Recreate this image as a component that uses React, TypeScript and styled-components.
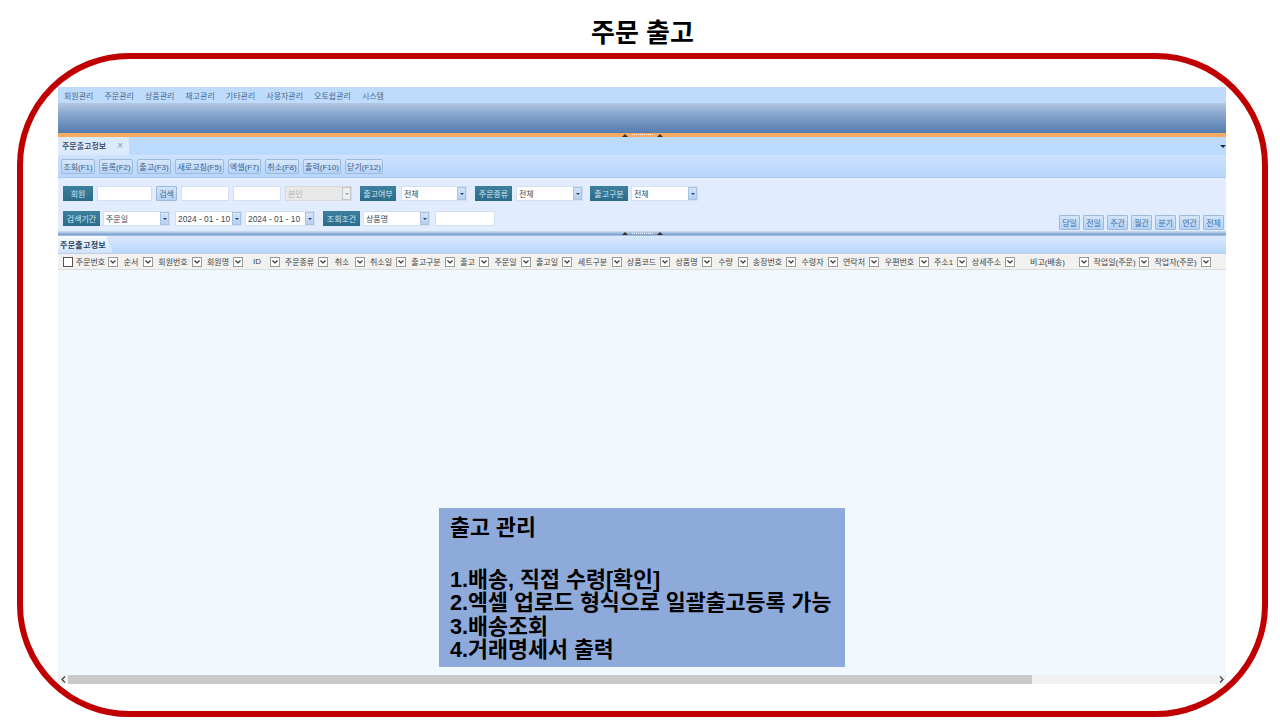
import React from "react";
import styled, { createGlobalStyle } from "styled-components";

const GlobalStyle = createGlobalStyle`
  html, body { margin: 0; padding: 0; background: #fff; }
  body { font-family: "Liberation Sans", "Noto Sans CJK KR", sans-serif; }
`;

const Page = styled.div`
  width: 1251px;
  height: 720px;
  padding: 0 12px 0 17px;
  display: flex;
  flex-direction: column;
`;

const Title = styled.div`
  height: 53px;
  display: flex;
  align-items: center;
  justify-content: center;
  padding-top: 7px;
  box-sizing: border-box;
  font-size: 26px;
  font-weight: 700;
  color: #000;
`;

const Frame = styled.div`
  width: 1251px;
  height: 664px;
  box-sizing: border-box;
  border: 6px solid #c00000;
  border-radius: 112px;
  padding: 28px 0 0 35px;
`;

const Window = styled.div`
  position: relative;
  width: 1168px;
  height: 597px;
  display: flex;
  flex-direction: column;
  font-size: 8px;
  color: #3f5f80;
`;

const MenuBar = styled.div`
  height: 16px;
  flex: none;
  background: #bfdbfc;
  display: flex;
  align-items: center;
  gap: 11px;
  padding-left: 6px;
  color: #4b6a8c;
`;

const Ribbon = styled.div`
  height: 30px;
  flex: none;
  background: linear-gradient(#b4c6e2 0%, #8ca8cf 35%, #5f86b6 85%, #587eb0 100%);
`;

const Splitter = styled.div<{ $tone: "orange" | "blue" }>`
  height: ${(p) => (p.$tone === "orange" ? 4 : 5)}px;
  flex: none;
  display: flex;
  align-items: center;
  justify-content: center;
  gap: 3px;
  background: ${(p) =>
    p.$tone === "orange"
      ? "#f7ab62"
      : "linear-gradient(#d0e0f4, #7ba0cc 75%, #b5cfee)"};
`;

const Handle = styled.span`
  width: 0;
  height: 0;
  border-left: 3px solid transparent;
  border-right: 3px solid transparent;
  border-bottom: 3px solid #3a3020;
`;

const HandleDots = styled.span`
  width: 21px;
  height: 1px;
  margin: 0 1px;
  border-top: 1px dotted #f4f4f4;
`;

const TabStrip = styled.div`
  position: relative;
  height: 18px;
  flex: none;
  background: #bcdafd;
  display: flex;
`;

const DocTab = styled.div`
  width: 71px;
  box-sizing: border-box;
  padding: 0 4px 2px;
  display: flex;
  align-items: center;
  justify-content: space-between;
  background: #dbeafd;
  color: #2e4258;
  font-weight: 500;
`;

const TabClose = styled.span`
  color: #8a99aa;
  font-size: 10px;
  margin-right: 2px;
`;

const TabMenu = styled.span`
  position: absolute;
  right: 0;
  top: 8px;
  border-left: 3px solid transparent;
  border-right: 3px solid transparent;
  border-top: 3px solid #1c2a3a;
`;

const Toolbar = styled.div`
  height: 23px;
  flex: none;
  box-sizing: border-box;
  border-bottom: 1px solid #a9c8ee;
  background: linear-gradient(#cde2fd, #b8d6fb);
  display: flex;
  align-items: center;
  gap: 4px;
  padding: 0 0 0 3px;
`;

const ToolButton = styled.div<{ $w: number }>`
  width: ${(p) => p.$w}px;
  height: 15px;
  box-sizing: border-box;
  border: 1px solid #9dbad9;
  border-radius: 2px;
  background: linear-gradient(#d6e7fc, #b5d3f9);
  display: flex;
  align-items: center;
  justify-content: center;
  color: #3f5f80;
  white-space: nowrap;
`;

const SearchPanel = styled.div`
  height: 53px;
  flex: none;
  background: #e1edfe;
  display: flex;
  flex-direction: column;
  box-sizing: border-box;
  padding: 8px 2px 0 5px;
  gap: 10px;
`;

const SearchRow = styled.div`
  display: flex;
  align-items: flex-start;
  height: 15px;
`;

const Label = styled.div<{ $w: number; $ml?: number }>`
  width: ${(p) => p.$w}px;
  margin-left: ${(p) => p.$ml ?? 0}px;
  height: 15px;
  flex: none;
  background: linear-gradient(#3e7f9e, #2c6c8a);
  color: #cfe6f5;
  display: flex;
  align-items: center;
  justify-content: center;
  white-space: nowrap;
`;

const TextInput = styled.div<{ $w: number; $ml?: number }>`
  width: ${(p) => p.$w}px;
  margin-left: ${(p) => p.$ml ?? 0}px;
  height: 15px;
  flex: none;
  box-sizing: border-box;
  background: #fff;
  border: 1px solid #d2e0f2;
`;

const SmallButton = styled.div<{ $w: number; $ml?: number }>`
  width: ${(p) => p.$w}px;
  margin-left: ${(p) => p.$ml ?? 0}px;
  height: 15px;
  flex: none;
  box-sizing: border-box;
  border: 1px solid #9dbad9;
  border-radius: 1px;
  background: linear-gradient(#d3e5fb, #b3d1f7);
  display: flex;
  align-items: center;
  justify-content: center;
  color: #3f6fa0;
`;

const SelectBox = styled.div<{ $w: number; $ml?: number; $off?: boolean }>`
  width: ${(p) => p.$w}px;
  margin-left: ${(p) => p.$ml ?? 0}px;
  height: 15px;
  flex: none;
  box-sizing: border-box;
  background: ${(p) => (p.$off ? "#e8e8e8" : "#fff")};
  border: 1px solid ${(p) => (p.$off ? "#d8d8d8" : "#d2e0f2")};
  color: ${(p) => (p.$off ? "#b0b4b8" : "#3a4654")};
  display: flex;
  align-items: center;
  padding-left: 2px;
  white-space: nowrap;
`;

const SelectText = styled.span<{ $date?: boolean }>`
  flex: 1;
  font-size: ${(p) => (p.$date ? 8.4 : 8)}px;
`;

const SelectArrow = styled.span<{ $off?: boolean }>`
  width: 9px;
  height: 13px;
  flex: none;
  box-sizing: border-box;
  border: 1px solid ${(p) => (p.$off ? "#c4c8cc" : "#a8c4e4")};
  background: ${(p) => (p.$off ? "#eceef0" : "linear-gradient(#d4e4f8, #b6d0f2)")};
  display: flex;
  align-items: center;
  justify-content: center;
  &::after {
    content: "";
    border-left: 2px solid transparent;
    border-right: 2px solid transparent;
    border-top: 2px solid ${(p) => (p.$off ? "#9aa0a6" : "#27405e")};
  }
`;

const PeriodGroup = styled.div`
  margin-left: auto;
  margin-top: 4px;
  display: flex;
  gap: 3px;
`;

const GridTabBar = styled.div`
  height: 18px;
  flex: none;
  box-sizing: border-box;
  border-bottom: 1px solid #bcd0e6;
  background: linear-gradient(#dbe9fd, #b6d5fb);
  display: flex;
`;

const GridTab = styled.div`
  width: 55px;
  box-sizing: border-box;
  padding-left: 2px;
  background: linear-gradient(#fafcff, #cfe2fb);
  clip-path: polygon(0 0, 48px 0, 100% 100%, 0 100%);
  color: #21405e;
  font-weight: 700;
  letter-spacing: 0.3px;
  display: flex;
  align-items: center;
  white-space: nowrap;
`;

const GridHeader = styled.div`
  height: 16px;
  flex: none;
  box-sizing: border-box;
  background: #f1f1ef;
  border-bottom: 1px solid #dcdcdc;
  display: flex;
  color: #454545;
`;

const HeaderCell = styled.div<{ $w: number }>`
  width: ${(p) => p.$w}px;
  flex: none;
  box-sizing: border-box;
  padding-right: 1px;
  display: flex;
  align-items: center;
  white-space: nowrap;
`;

const HeaderText = styled.span`
  flex: 1;
  text-align: center;
`;

const CheckBox = styled.span`
  width: 8px;
  height: 8px;
  flex: none;
  margin-left: 5px;
  background: #fff;
  border: 1px solid #555;
`;

const ColumnArrow = styled.span`
  width: 10px;
  height: 10px;
  flex: none;
  box-sizing: border-box;
  background: #fff;
  border: 1px solid #9a9a9a;
  display: flex;
  align-items: center;
  justify-content: center;
`;

const GridBody = styled.div`
  position: relative;
  flex: 1;
  background: #f1f9fe;
`;

const Note = styled.div`
  position: absolute;
  left: 381px;
  top: 238px;
  width: 406px;
  height: 159px;
  box-sizing: border-box;
  padding: 8px 0 0 11px;
  background: #8eaadb;
  color: #000;
  font-size: 21.7px;
  font-weight: 700;
  line-height: 23.5px;
  white-space: nowrap;
`;

const NoteHead = styled.div`
  margin-bottom: 28px;
`;

const NoteLine = styled.div``;

const ScrollBar = styled.div`
  height: 9px;
  flex: none;
  background: #f1f1f1;
  display: flex;
  align-items: center;
`;

const ScrollButton = styled.span`
  width: 10px;
  flex: none;
  display: flex;
  justify-content: center;
`;

const ScrollThumb = styled.span`
  width: 964px;
  height: 9px;
  background: #c9c9c9;
`;

const ScrollRest = styled.span`
  flex: 1;
`;

const menus = ["회원관리", "주문관리", "상품관리", "재고관리", "기타관리", "사용자관리", "오토쉽관리", "시스템"];

const tools: [string, number][] = [
  ["조회(F1)", 34],
  ["등록(F2)", 34],
  ["출고(F3)", 34],
  ["새로고침(F5)", 49],
  ["엑셀(F7)", 33],
  ["취소(F8)", 34],
  ["출력(F10)", 38],
  ["닫기(F12)", 38],
];

const periods = ["당일", "전일", "주간", "월간", "분기", "연간", "전체"];

const columns: [string, number][] = [
  ["주문번호", 61],
  ["순서", 35],
  ["회원번호", 49],
  ["회원명", 41],
  ["ID", 37],
  ["주문종류", 48],
  ["취소", 37],
  ["취소일", 41],
  ["출고구분", 49],
  ["출고", 34],
  ["주문일", 42],
  ["출고일", 41],
  ["세트구분", 50],
  ["상품코드", 48],
  ["상품명", 42],
  ["수량", 36],
  ["송장번호", 48],
  ["수령자", 42],
  ["연락처", 41],
  ["우편번호", 50],
  ["주소1", 38],
  ["상세주소", 48],
  ["비고(배송)", 74],
  ["작업일(주문)", 60],
  ["작업자(주문)", 62],
];

const Chevron = () => (
  <svg width="6" height="4" viewBox="0 0 6 4">
    <path d="M0.5 0.5 L3 3 L5.5 0.5" fill="none" stroke="#333" strokeWidth="1.2" />
  </svg>
);

const ScrollArrow = ({ d }: { d: string }) => (
  <svg width="5" height="7" viewBox="0 0 5 7">
    <path d={d} fill="none" stroke="#444" strokeWidth="1.3" />
  </svg>
);

const Select = ({ w, ml, text, off, date }: { w: number; ml?: number; text: string; off?: boolean; date?: boolean }) => (
  <SelectBox $w={w} $ml={ml} $off={off}>
    <SelectText $date={date}>{text}</SelectText>
    <SelectArrow $off={off} />
  </SelectBox>
);

const SplitHandle = () => (
  <>
    <Handle />
    <HandleDots />
    <Handle />
  </>
);

export default function App() {
  return (
    <Page>
      <GlobalStyle />
      <Title>주문 출고</Title>
      <Frame>
        <Window>
          <MenuBar>
            {menus.map((m) => (
              <span key={m}>{m}</span>
            ))}
          </MenuBar>
          <Ribbon />
          <Splitter $tone="orange">
            <SplitHandle />
          </Splitter>
          <TabStrip>
            <DocTab>
              주문출고정보
              <TabClose>×</TabClose>
            </DocTab>
            <TabMenu />
          </TabStrip>
          <Toolbar>
            {tools.map(([t, w]) => (
              <ToolButton key={t} $w={w}>
                {t}
              </ToolButton>
            ))}
          </Toolbar>
          <SearchPanel>
            <SearchRow>
              <Label $w={30}>회원</Label>
              <TextInput $w={55} $ml={4} />
              <SmallButton $w={21} $ml={4}>
                검색
              </SmallButton>
              <TextInput $w={48} $ml={4} />
              <TextInput $w={48} $ml={4} />
              <Select w={67} ml={4} text="본인" off />
              <Label $w={36} $ml={8}>
                출고여부
              </Label>
              <Select w={66} ml={5} text="전체" />
              <Label $w={37} $ml={8}>
                주문종류
              </Label>
              <Select w={67} ml={4} text="전체" />
              <Label $w={38} $ml={7}>
                출고구분
              </Label>
              <Select w={67} ml={3} text="전체" />
            </SearchRow>
            <SearchRow>
              <Label $w={37}>검색기간</Label>
              <Select w={67} ml={3} text="주문일" />
              <Select w={67} ml={5} text="2024 - 01 - 10" date />
              <Select w={70} ml={3} text="2024 - 01 - 10" date />
              <Label $w={37} $ml={8}>
                조회조건
              </Label>
              <Select w={67} ml={3} text="상품명" />
              <TextInput $w={60} $ml={5} />
              <PeriodGroup>
                {periods.map((p) => (
                  <SmallButton key={p} $w={21}>
                    {p}
                  </SmallButton>
                ))}
              </PeriodGroup>
            </SearchRow>
          </SearchPanel>
          <Splitter $tone="blue">
            <SplitHandle />
          </Splitter>
          <GridTabBar>
            <GridTab>주문출고정보</GridTab>
          </GridTabBar>
          <GridHeader>
            {columns.map(([c, w], i) => (
              <HeaderCell key={c} $w={w}>
                {i === 0 && <CheckBox />}
                <HeaderText>{c}</HeaderText>
                <ColumnArrow>
                  <Chevron />
                </ColumnArrow>
              </HeaderCell>
            ))}
          </GridHeader>
          <GridBody>
            <Note>
              <NoteHead>출고 관리</NoteHead>
              <NoteLine>1.배송, 직접 수령[확인]</NoteLine>
              <NoteLine>2.엑셀 업로드 형식으로 일괄출고등록 가능</NoteLine>
              <NoteLine>3.배송조회</NoteLine>
              <NoteLine>4.거래명세서 출력</NoteLine>
            </Note>
          </GridBody>
          <ScrollBar>
            <ScrollButton>
              <ScrollArrow d="M4 0.5 L1 3.5 L4 6.5" />
            </ScrollButton>
            <ScrollThumb />
            <ScrollRest />
            <ScrollButton>
              <ScrollArrow d="M1 0.5 L4 3.5 L1 6.5" />
            </ScrollButton>
          </ScrollBar>
        </Window>
      </Frame>
    </Page>
  );
}
